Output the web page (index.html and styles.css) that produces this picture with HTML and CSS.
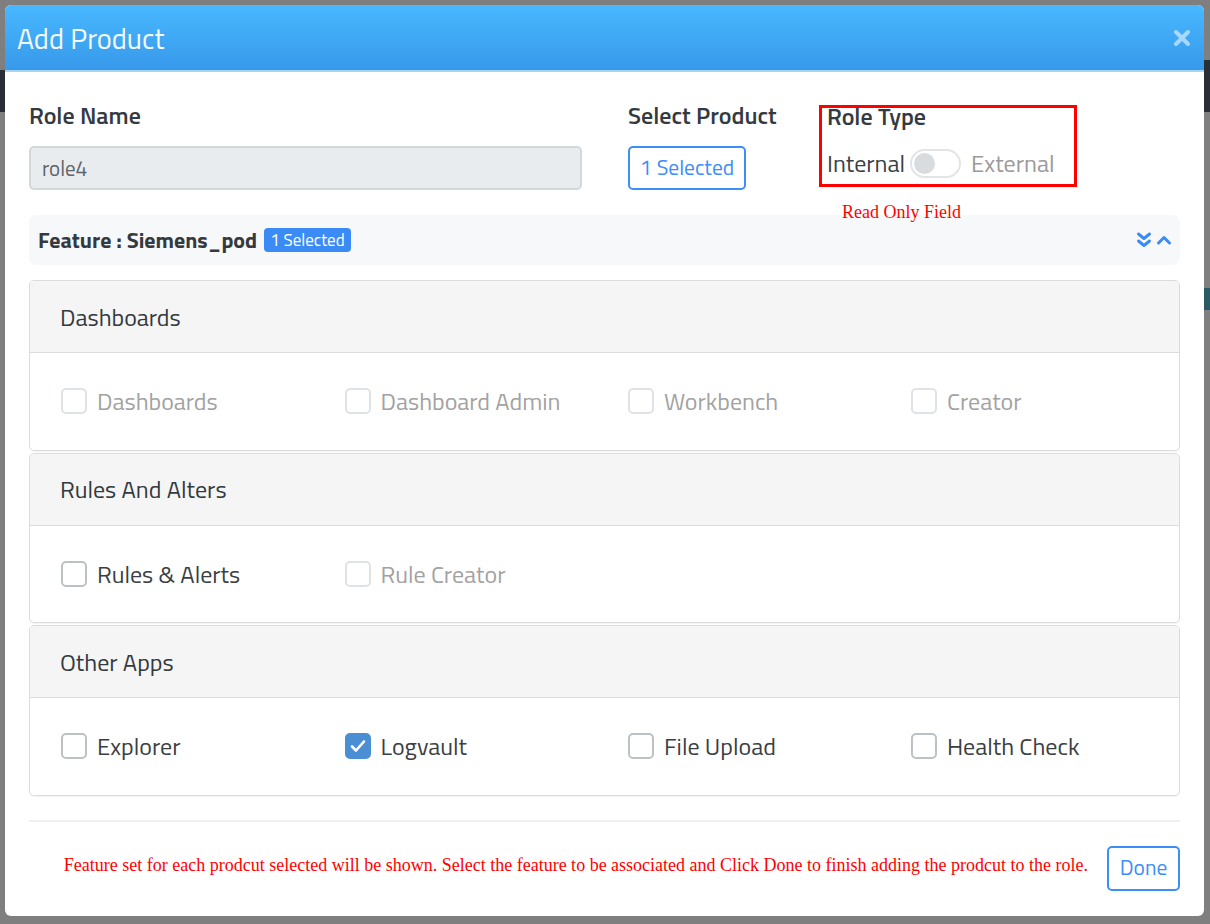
FILE: index.html
```html
<!DOCTYPE html>
<html lang="en">
<head>
<meta charset="utf-8">
<title>Add Product</title>
<link rel="stylesheet" href="styles.css">
</head>
<body>
<div class="modal">
  <div class="modal-header">
    <h1 class="modal-title">Add Product</h1>
    <button class="close" aria-label="Close">
      <svg width="18" height="18" viewBox="0 0 18 18"><path d="M3 3 L15 15 M15 3 L3 15" stroke="currentColor" stroke-width="4" stroke-linecap="round" fill="none"/></svg>
    </button>
  </div>
  <div class="modal-body">
    <div class="top-row">
      <div class="col-name">
        <div class="field-label">Role Name</div>
        <div class="input">role4</div>
      </div>
      <div class="col-product">
        <div class="field-label">Select Product</div>
        <button class="btn-outline">1 Selected</button>
      </div>
      <div class="col-type">
        <div class="type-box">
          <div class="field-label">Role Type</div>
          <div class="toggle-row">
            <span class="opt-on">Internal</span>
            <span class="switch"><span class="knob"></span></span>
            <span class="opt-off">External</span>
          </div>
        </div>
        <div class="note">Read Only Field</div>
      </div>
    </div>

    <div class="feature-bar">
      <span class="feature-title">Feature : Siemens_pod</span>
      <span class="badge">1 Selected</span>
      <span class="bar-icons">
        <svg width="16" height="18" viewBox="0 0 16 18"><path d="M2.5 3 L8 7.5 L13.5 3 M2.5 10 L8 14.5 L13.5 10" stroke="currentColor" stroke-width="3" fill="none" stroke-linecap="round" stroke-linejoin="round"/></svg>
        <svg width="16" height="18" viewBox="0 0 16 18"><path d="M2.5 12 L8 6.5 L13.5 12" stroke="currentColor" stroke-width="3" fill="none" stroke-linecap="round" stroke-linejoin="round"/></svg>
      </span>
    </div>

    <div class="card">
      <div class="card-header">Dashboards</div>
      <div class="card-body">
        <label class="check disabled"><span class="box"></span>Dashboards</label>
        <label class="check disabled"><span class="box"></span>Dashboard Admin</label>
        <label class="check disabled"><span class="box"></span>Workbench</label>
        <label class="check disabled"><span class="box"></span>Creator</label>
      </div>
    </div>

    <div class="card">
      <div class="card-header">Rules And Alters</div>
      <div class="card-body">
        <label class="check"><span class="box"></span>Rules &amp; Alerts</label>
        <label class="check disabled"><span class="box"></span>Rule Creator</label>
      </div>
    </div>

    <div class="card">
      <div class="card-header">Other Apps</div>
      <div class="card-body">
        <label class="check"><span class="box"></span>Explorer</label>
        <label class="check"><span class="box checked"><svg width="26" height="26" viewBox="0 0 26 26"><path d="M7 13.5 L11 17.5 L19 8.5" stroke="#fff" stroke-width="2.6" fill="none" stroke-linecap="round" stroke-linejoin="round"/></svg></span>Logvault</label>
        <label class="check"><span class="box"></span>File Upload</label>
        <label class="check"><span class="box"></span>Health Check</label>
      </div>
    </div>

    <hr class="divider">

    <div class="footer">
      <span class="footer-note">Feature set for each prodcut selected will be shown. Select the feature to be associated and Click Done to finish adding the prodcut to the role.</span>
      <button class="btn-outline btn-done">Done</button>
    </div>
  </div>
</div>
</body>
</html>
```
FILE: styles.css
```css
* { box-sizing: border-box; }

html, body { margin: 0; padding: 0; }

body {
  width: 1210px;
  height: 924px;
  overflow: hidden;
  background-color: #7f7f7f;
  background-image:
    linear-gradient(#2a2f36, #2a2f36),
    linear-gradient(#2a2f36, #2a2f36),
    linear-gradient(#2a5a66, #2a5a66);
  background-repeat: no-repeat;
  background-size: 5px 42px, 6px 52px, 6px 22px;
  background-position: 0 70px, 1204px 60px, 1204px 288px;
  font-family: "Titillium Web", "Roboto", sans-serif;
  color: #343a40;
  padding: 5px 0 0 5px;
}

.modal {
  width: 1199px;
  height: 911px;
  background: #fff;
  border-radius: 6px;
  overflow: hidden;
}

.modal-header {
  height: 67px;
  background: linear-gradient(#48b8ff, #3799ea);
  border-bottom: 2px solid #a9d3f3;
  display: flex;
  align-items: center;
  justify-content: space-between;
  padding: 0 13px 0 12px;
}

.modal-title {
  margin: 0;
  font-size: 28.5px;
  font-weight: 400;
  color: #f4faff;
  line-height: 1;
  padding-top: 3px;
}

.close {
  border: 0;
  background: none;
  padding: 0;
  color: rgba(255, 255, 255, 0.55);
  display: flex;
  margin-top: 1px;
}

.modal-body {
  padding: 0 24px;
}

.top-row {
  display: flex;
  align-items: flex-start;
  padding-top: 33px;
}

.field-label {
  font-size: 24px;
  font-weight: 600;
  line-height: 24px;
  color: #343a40;
}

.col-name {
  width: 553px;
  margin-right: 46px;
}

.col-name .field-label,
.col-product .field-label {
  margin-top: -2px;
}

.input {
  margin-top: 19px;
  height: 44px;
  background: #e9ecef;
  border: 2px solid #d4d8dc;
  border-radius: 5px;
  font-size: 21px;
  color: #5f656b;
  display: flex;
  align-items: center;
  padding-left: 11px;
}

.col-product {
  width: 191px;
}

.btn-outline {
  font-family: inherit;
  background: #fff;
  border: 2px solid #3d8ef8;
  border-radius: 5px;
  color: #3d8ef8;
  font-size: 21.5px;
  line-height: 1;
}

.col-product .btn-outline {
  margin-top: 19px;
  width: 118px;
  height: 44px;
  padding: 0;
}

.col-type {
  width: 258px;
  position: relative;
}

.type-box {
  border: 3px solid #ff0000;
  height: 82px;
  padding: 0 0 0 5px;
}

.type-box .field-label {
  line-height: 18px;
  margin-top: -1px;
}

.toggle-row {
  display: flex;
  align-items: center;
  margin-top: 24px;
  font-size: 24px;
  line-height: 29px;
}

.opt-on { color: #3a3f44; }
.opt-off { color: #9a9a9a; margin-left: 10px; }

.switch {
  margin-left: 5px;
  width: 51px;
  height: 29px;
  border: 2px solid #e2e4e6;
  border-radius: 15px;
  background: #fff;
  display: flex;
  align-items: center;
  padding-left: 2px;
}

.knob {
  width: 21px;
  height: 21px;
  border-radius: 50%;
  background: #d9dcdf;
}

.note {
  position: absolute;
  left: 23px;
  top: 97px;
  font-family: "Liberation Serif", serif;
  font-size: 18px;
  color: #ff0000;
  white-space: nowrap;
}

.feature-bar {
  margin-top: 25px;
  height: 50px;
  background: #f7f8fa;
  border-radius: 7px;
  display: flex;
  align-items: center;
  padding: 0 8px 0 9px;
}

.feature-title {
  font-size: 22px;
  font-weight: 700;
  color: #343a40;
}

.badge {
  margin-left: 7px;
  background: #3b8bf6;
  color: #fff;
  font-size: 17px;
  height: 24px;
  line-height: 24px;
  padding: 0 6px;
  border-radius: 4px;
}

.bar-icons {
  margin-left: auto;
  display: flex;
  gap: 4px;
  color: #3b8bf6;
}

.card {
  border: 1px solid #dcdcdc;
  border-radius: 5px;
  box-shadow: 0 1px 1px rgba(0,0,0,0.05);
  overflow: hidden;
  margin-bottom: 2px;
}

.feature-bar + .card { margin-top: 15px; }

.card-header {
  height: 72px;
  background: #f5f5f5;
  border-bottom: 1px solid #dcdcdc;
  display: flex;
  align-items: center;
  padding-left: 30px;
  font-size: 24px;
  color: #333a40;
}

.card-body {
  height: 96.5px;
  display: grid;
  grid-template-columns: 283.5px 283.5px 283px 1fr;
  align-items: center;
  padding-left: 31px;
}

.check {
  display: flex;
  align-items: center;
  font-size: 24px;
  color: #3a3f44;
  white-space: nowrap;
}

.check.disabled { color: #a2a2a2; }

.box {
  width: 26px;
  height: 26px;
  border: 2px solid #bcc1c6;
  border-radius: 5px;
  background: #fff;
  margin-right: 10px;
  flex: none;
  display: flex;
}

.check.disabled .box { border-color: #dfe3e7; }

.box.checked {
  background: #4a8fd4;
  border-color: #4a8fd4;
}

.box.checked svg { margin: -2px; }

.divider {
  margin: 24px 0 0;
  border: 0;
  border-top: 2px solid #eef0f2;
}

.footer {
  display: flex;
  align-items: center;
  justify-content: flex-end;
  padding-top: 24px;
}

.footer-note {
  font-family: "Liberation Serif", serif;
  font-size: 18px;
  color: #ff0000;
  margin-right: 19px;
  margin-top: -5px;
}

.btn-done {
  width: 73px;
  height: 45px;
  padding: 0;
}
```
